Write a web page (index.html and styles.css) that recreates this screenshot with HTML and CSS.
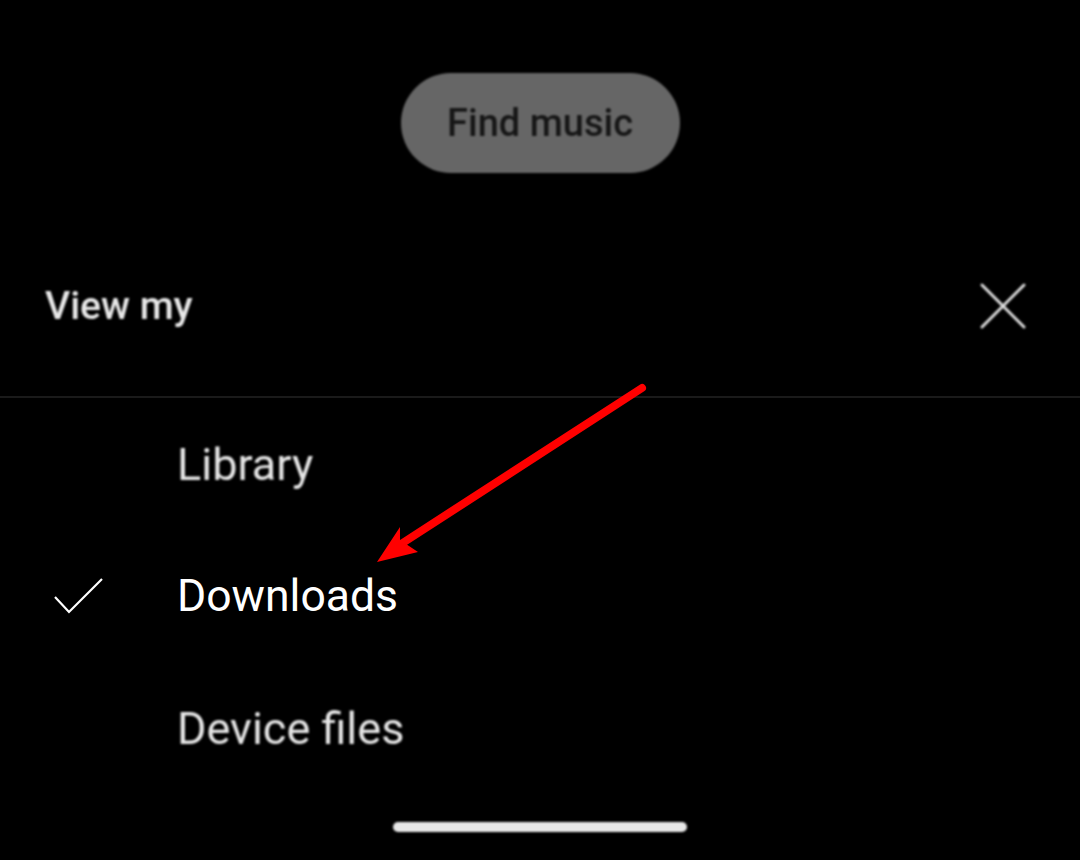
FILE: index.html
```html
<!DOCTYPE html>
<html lang="en">
<head>
    <meta charset="UTF-8">
    <meta name="viewport" content="width=device-width, initial-scale=1.0">
    <title>View my</title>
    <link rel="stylesheet" href="styles.css">
</head>
<body>
    <div class="screen">
        <div class="top">
            <button class="find-btn">Find music</button>
        </div>

        <div class="sheet-head">
            <span class="sheet-title">View my</span>
            <svg class="close-icon" width="46" height="46" viewBox="0 0 46 46">
                <path d="M2 2 L44 44 M44 2 L2 44" stroke="#dcdcdc" stroke-width="3" stroke-linecap="round" fill="none"/>
            </svg>
        </div>
        <div class="divider"></div>

        <ul class="options">
            <li class="option">
                <span class="check"></span>
                <span class="label soft">Library</span>
            </li>
            <li class="option selected">
                <span class="check">
                    <svg width="50" height="38" viewBox="0 0 50 38">
                        <path d="M1 20 L15 35 L48 2" stroke="#fff" stroke-width="2.2" fill="none"/>
                    </svg>
                </span>
                <span class="label">Downloads</span>
            </li>
            <li class="option">
                <span class="check"></span>
                <span class="label soft">Device files</span>
            </li>
        </ul>

        <div class="home-bar"></div>

        <!-- annotation arrow drawn over the screenshot -->
        <svg class="arrow" width="1080" height="860" viewBox="0 0 1080 860">
            <line x1="642" y1="388" x2="398" y2="546" stroke="#ff0000" stroke-width="8" stroke-linecap="round"/>
            <polygon points="377,562 400,527 400,540 418,552" fill="#ff0000"/>
        </svg>
    </div>
</body>
</html>
```

FILE: styles.css
```css
body {
    margin: 0;
    background-color: #000;
    font-family: Roboto, "Noto Sans", sans-serif;
}

.screen {
    position: relative;
    width: 1080px;
    height: 860px;
    overflow: hidden;
}

.top {
    padding-top: 73px;
    display: flex;
    justify-content: center;
}

.find-btn {
    width: 279px;
    height: 100px;
    padding: 0;
    border: none;
    border-radius: 50px;
    background-color: #666666;
    color: #161616;
    font-family: Roboto, sans-serif;
    font-size: 38px;
    font-weight: 500;
    filter: blur(1px);
}

.sheet-head {
    margin-top: 77px;
    height: 112px;
    padding: 0 54px 0 45px;
    display: flex;
    justify-content: space-between;
    align-items: center;
}

.sheet-title {
    color: #e8e8e8;
    font-size: 39px;
    font-weight: 500;
    filter: blur(1px);
}

.close-icon {
    filter: blur(0.8px);
}

.divider {
    margin-top: 34px;
    height: 2px;
    background-color: #1a1a1a;
}

.options {
    list-style: none;
    margin: 0;
    padding: 0;
}

.option {
    height: 132px;
    display: flex;
    align-items: center;
}

.check {
    width: 177px;
    padding-left: 54px;
    box-sizing: border-box;
    display: flex;
    align-items: center;
}

.label {
    color: #fff;
    font-size: 44.5px;
}

.label.soft {
    color: #e6e6e6;
    font-size: 45px;
    filter: blur(1.2px);
}

.home-bar {
    margin: 28px auto 0;
    width: 294px;
    height: 10px;
    border-radius: 5px;
    background-color: #e8e8e8;
    filter: blur(1px);
}

.arrow {
    position: absolute;
    left: 0;
    top: 0;
    pointer-events: none;
}
```
